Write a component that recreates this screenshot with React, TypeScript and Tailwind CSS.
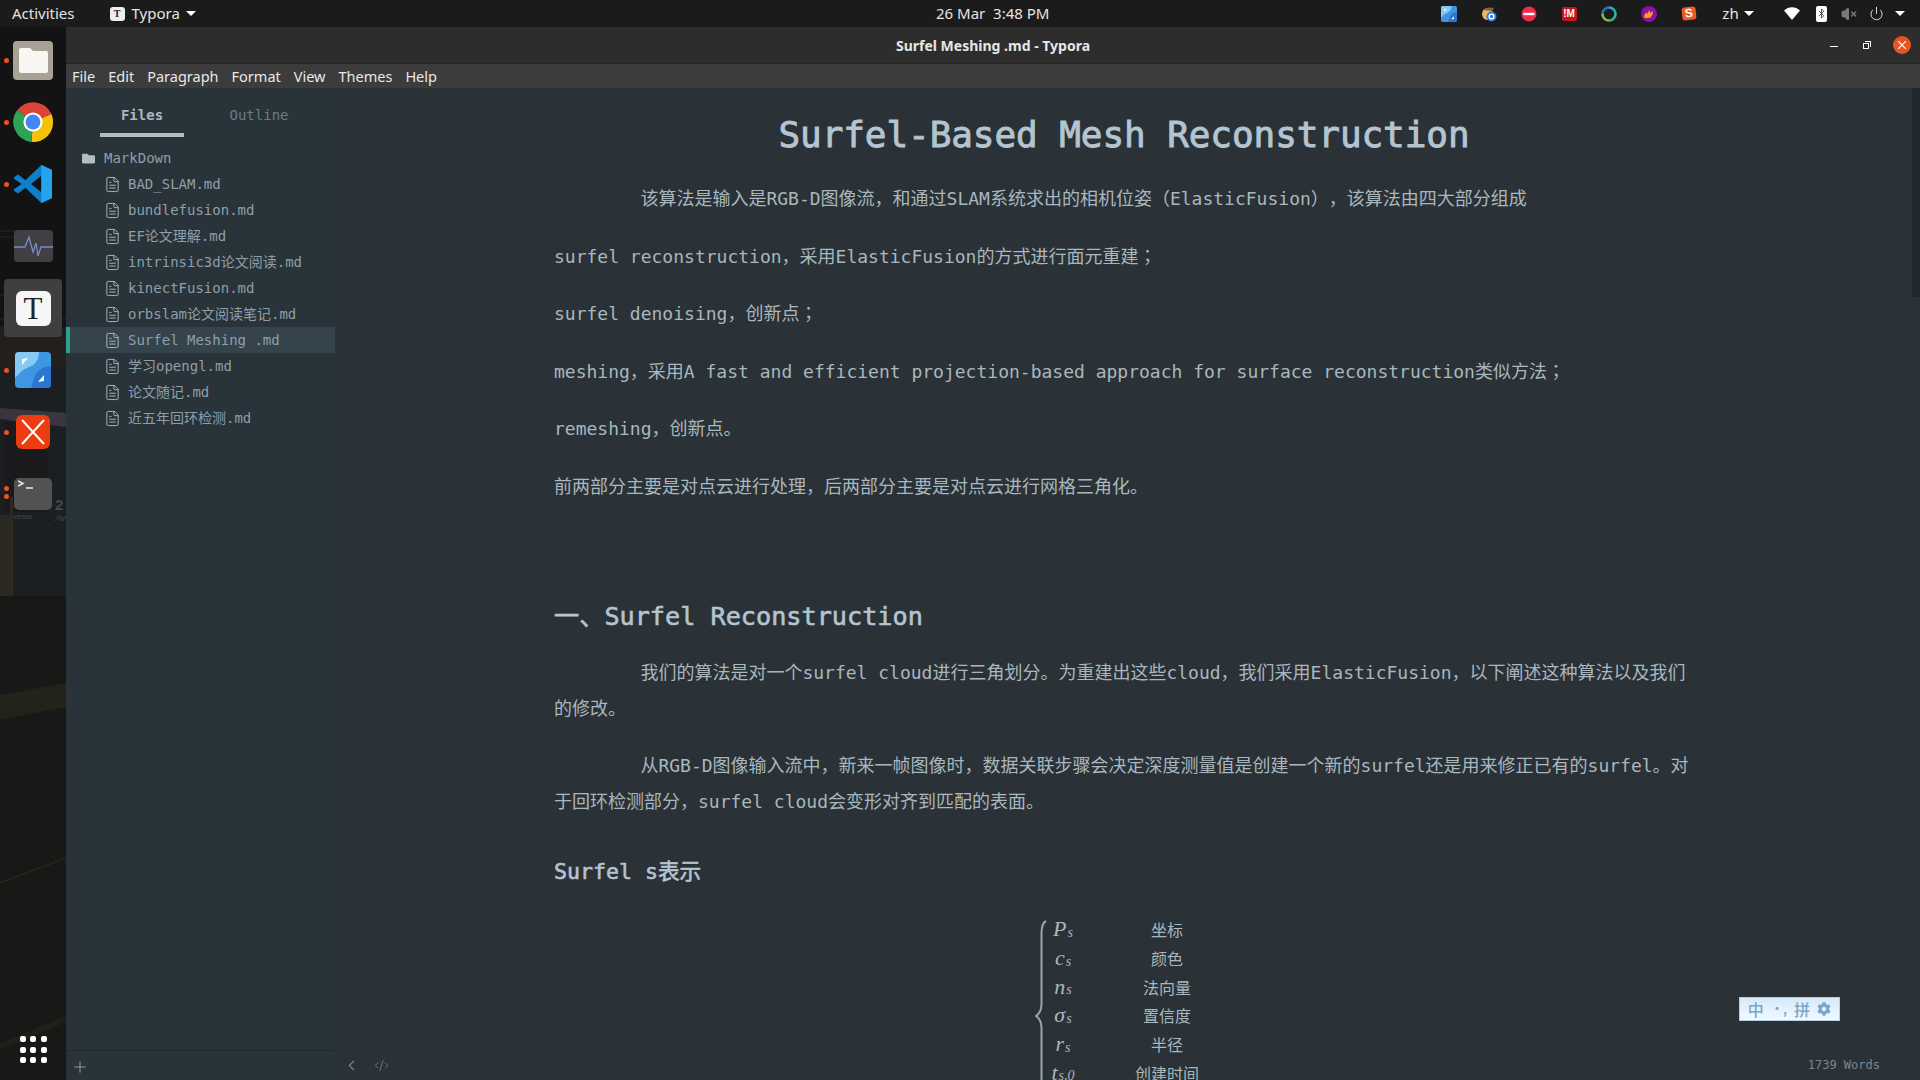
import React from "react";
import { Bluetooth, ChevronLeft, CodeXml, FileText, Plus, Power, VolumeX } from "lucide-react";
import { FaCog, FaFolder } from "react-icons/fa";

const files = [
  "BAD_SLAM.md",
  "bundlefusion.md",
  "EF论文理解.md",
  "intrinsic3d论文阅读.md",
  "kinectFusion.md",
  "orbslam论文阅读笔记.md",
  "Surfel Meshing .md",
  "学习opengl.md",
  "论文随记.md",
  "近五年回环检测.md",
];

const menus = ["File", "Edit", "Paragraph", "Format", "View", "Themes", "Help"];

const mathRows: [string, string, string][] = [
  ["P", "s", "坐标"],
  ["c", "s", "颜色"],
  ["n", "s", "法向量"],
  ["σ", "s", "置信度"],
  ["r", "s", "半径"],
  ["t", "s,0", "创建时间"],
];

function Caret() {
  return <span className="inline-block w-0 h-0 border-x-[5px] border-x-transparent border-t-[5px] border-t-white" />;
}

// the semicolon sits centred in the reference, as in the TC font
function Semi() {
  return <span className="leading-[0] font-['Noto_Sans_CJK_TC',sans-serif]">；</span>;
}

function BlueAppIcon({ size }: { size: number }) {
  return (
    <svg width={size} height={size} viewBox="0 0 36 36">
      <rect width="36" height="36" rx="4" fill="#3f97e4" />
      <path d="M0 4a4 4 0 0 1 4-4h20c0 8-4 13-10 15S4 22 0 26z" fill="#86caf3" />
      <path d="M36 14c-8 0-15 5-17 12-1 4-2 7-3 10h16a4 4 0 0 0 4-4z" fill="#2b76d2" />
      <path d="M7 7l6-1-6 7z" fill="#fff" />
      <path d="M29 29l-6 1 6-7z" fill="#fff" />
    </svg>
  );
}

function Tray() {
  return (
    <div className="flex items-center ml-auto h-full pr-[6px]">
      <div className="w-10 flex justify-center">
        <BlueAppIcon size={16} />
      </div>
      <div className="w-10 flex justify-center">
        <svg width="16" height="16" viewBox="0 0 16 16">
          <ellipse cx="6.5" cy="8" rx="5.5" ry="6" fill="#e8b46c" />
          <path d="M2 4c2-3 8-3 11-2l-2 3z" fill="#8a6236" />
          <circle cx="10.5" cy="10.5" r="5" fill="#2a7de1" />
          <circle cx="10.5" cy="10.5" r="2.4" fill="none" stroke="#fff" strokeWidth="1.4" />
        </svg>
      </div>
      <div className="w-10 flex justify-center">
        <svg width="16" height="16" viewBox="0 0 16 16">
          <circle cx="8" cy="8" r="7.5" fill="#ee2c4b" />
          <rect x="2.5" y="6.8" width="11" height="2.4" fill="#fff" />
        </svg>
      </div>
      <div className="w-10 flex justify-center">
        <span className="w-[15px] h-[14px] rounded-[2px] bg-[#c4161c] text-white text-[10px] leading-[14px] font-bold text-center font-['Liberation_Sans',sans-serif]">!M</span>
      </div>
      <div className="w-10 flex justify-center">
        <svg width="16" height="16" viewBox="0 0 16 16" fill="none" strokeWidth="2.6">
          <path d="M8 1.5a6.5 6.5 0 0 1 6.5 6.5" stroke="#2fa8c8" />
          <path d="M14.5 8A6.5 6.5 0 0 1 8 14.5" stroke="#3bb58f" />
          <path d="M8 14.5A6.5 6.5 0 0 1 1.5 8" stroke="#7ac143" />
          <path d="M1.5 8A6.5 6.5 0 0 1 8 1.5" stroke="#2b6fb5" />
        </svg>
      </div>
      <div className="w-10 flex justify-center">
        <svg width="16" height="16" viewBox="0 0 16 16">
          <circle cx="8" cy="8" r="8" fill="#8e0fa3" />
          <path d="M3 11c0-3 2-3 2-5 1 1 1 2 1 2 1-1 2-3 2-4 1 1 1 2 1 3 1-1 2-1 3-2 0 3-1 4-2 6-1 1-6 2-7 0z" fill="#f8a21b" />
        </svg>
      </div>
      <div className="w-10 flex justify-center">
        <span className="w-[14px] h-[13px] rounded-[3px] -rotate-6 bg-[#ee5a24] text-white text-[12px] leading-[13px] font-bold text-center font-['Liberation_Sans',sans-serif]">S</span>
      </div>
      <div className="w-[58px] flex items-center justify-center gap-[5px] text-[15px] text-[#e6e6e6]">
        zh <Caret />
      </div>
      <div className="w-[30px] ml-[10px] flex justify-center">
        <svg width="16" height="13" viewBox="0 0 16 13">
          <path d="M0 3.5C4.5-1 11.5-1 16 3.5L8 13z" fill="#fff" />
        </svg>
      </div>
      <div className="w-[28px] flex justify-center">
        <span className="w-[11px] h-4 rounded-[2px] bg-white flex items-center justify-center">
          <Bluetooth size={13} color="#222" strokeWidth={1.6} />
        </span>
      </div>
      <div className="w-[28px] flex justify-center">
        <VolumeX size={16} color="#7b7b7b" fill="#7b7b7b" />
      </div>
      <div className="w-[27px] flex justify-center">
        <Power size={15} color="#e6e6e6" strokeWidth={1.5} />
      </div>
      <div className="w-[24px] pr-1 flex justify-center">
        <Caret />
      </div>
    </div>
  );
}

function TopBar() {
  return (
    <div className="h-[27px] shrink-0 bg-[#1b1b1b] relative flex items-center text-[15px] text-[#e4e4e4] font-['Noto_Sans',sans-serif]">
      <span className="ml-3">Activities</span>
      <span className="ml-[35px] w-[15px] h-[14px] rounded-[3px] bg-[#eee] text-[#222] text-[10px] leading-[14px] text-center font-bold font-['Liberation_Serif',serif]">T</span>
      <span className="ml-[7px]">Typora</span>
      <span className="ml-[6px] flex">
        <Caret />
      </span>
      <span className="absolute left-[936px] text-[15px] whitespace-pre">26 Mar  3:48 PM</span>
      <Tray />
    </div>
  );
}

function Slot({ dots = 1, children }: { dots?: number; children: React.ReactNode }) {
  return (
    <div className="h-[62px] relative flex items-center justify-center">
      {dots === 1 && <span className="absolute left-[4px] top-[28.5px] w-[5px] h-[5px] rounded-full bg-[#e95420]" />}
      {dots === 2 && (
        <>
          <span className="absolute left-[4px] top-[23px] w-[5px] h-[5px] rounded-full bg-[#e95420]" />
          <span className="absolute left-[4px] top-[31px] w-[5px] h-[5px] rounded-full bg-[#e95420]" />
        </>
      )}
      {children}
    </div>
  );
}

function Dock() {
  return (
    <div className="w-[66px] shrink-0 relative overflow-hidden bg-[#131313] flex flex-col pt-[2px]">
      {/* wallpaper behind the dock */}
      <svg className="absolute inset-0" width="66" height="1053" viewBox="0 0 66 1053">
        <rect y="300" width="66" height="270" fill="#1b1f22" />
        <rect y="305" width="66" height="35" fill="#231f1c" />
        <path d="M0 381l66 5v14l-66-8z" fill="#3a3640" />
        <rect y="395" x="4" width="44" height="90" fill="#1a1a1c" />
        <rect y="488" width="10" height="82" fill="#2b2a22" />
        <rect y="470" x="10" width="3" height="100" fill="#2e2a22" />
        <rect y="569" width="66" height="484" fill="#181816" />
        <path d="M0 668L66 656V680L0 693z" fill="#23221b" />
        <path d="M0 856L66 831" stroke="#2c2c28" strokeWidth="1" />
        <path d="M0 1020l66-28" stroke="#1f1f1c" strokeWidth="6" />
        <path d="M0 204h30M0 210h16M0 268h50M0 292h66" stroke="#26261f" strokeWidth="1" />
        <text x="55" y="483" fontSize="15" fontWeight="bold" fill="#45474a" fontFamily="Liberation Sans, sans-serif">2</text>
        <text x="55" y="494" fontSize="9" fontStyle="italic" fill="#45474a" fontFamily="Liberation Sans, sans-serif">Av</text>
        <text x="13" y="492" fontSize="7" fill="#45474a" fontFamily="Liberation Sans, sans-serif">venue</text>
      </svg>

      <Slot>
        <div className="w-[40px] h-[39px] rounded-[4px] bg-[#a8a294] flex items-center justify-center">
          <svg width="29" height="25" viewBox="0 0 29 25">
            <path d="M2 0h9l3 3h13a2 2 0 0 1 2 2v18a2 2 0 0 1-2 2H2a2 2 0 0 1-2-2V2a2 2 0 0 1 2-2z" fill="#f7f6f3" />
          </svg>
        </div>
      </Slot>
      <Slot>
        <svg className="relative" width="40" height="40" viewBox="0 0 100 100">
          <path d="M50 50L11 20A50 50 0 0 1 96 30z" fill="#db4437" />
          <path d="M50 50L96 30A50 50 0 0 1 46 100z" fill="#f4c20d" />
          <path d="M50 50L46 100A50 50 0 0 1 11 20z" fill="#2fa354" />
          <circle cx="50" cy="50" r="24" fill="#fff" />
          <circle cx="50" cy="50" r="18.5" fill="#4285f4" />
        </svg>
      </Slot>
      <Slot>
        <svg className="relative" width="38" height="38" viewBox="0 0 100 100">
          <path fillRule="evenodd" d="M72 0L100 13V87L72 100L30 60L11 75L0 68V64L20 50L0 36V32L11 25L30 40zM72 28L45 50L72 72z" fill="#0f7fcb" />
          <path fillRule="evenodd" d="M72 0L100 13V87L72 100z" fill="#22a4ef" />
        </svg>
      </Slot>
      <Slot dots={0}>
        <div className="relative w-[39px] h-[32px] rounded-[4px] bg-[#403f44] flex items-center justify-center">
          <svg width="39" height="24" viewBox="0 0 39 24" fill="none" stroke="#7b8bc4" strokeWidth="1.3">
            <path d="M0 13h7l4 0 4-10 4 15 3-9 2 13 3-9h12" />
          </svg>
        </div>
      </Slot>
      <Slot>
        <div className="absolute left-[4px] top-[2px] w-[58px] h-[58px] rounded-[4px] bg-[#3f3f3f]" />
        <div className="relative w-[35px] h-[35px] rounded-[6px] bg-[#f6f6f6] text-[#222] text-[31px] leading-[35px] text-center font-['Liberation_Serif',serif]">T</div>
      </Slot>
      <Slot>
        <div className="relative flex">
          <BlueAppIcon size={36} />
        </div>
      </Slot>
      <Slot>
        <svg className="relative" width="34" height="34" viewBox="0 0 34 34">
          <rect width="34" height="34" rx="6" fill="#ec3d12" />
          <path d="M6 5l11 12L28 5M6 29l11-12 11 12" fill="none" stroke="#fff" strokeWidth="2" />
        </svg>
      </Slot>
      <Slot dots={2}>
        <div className="relative w-[38px] h-[32px] rounded-[5px] bg-[#525252] text-[#eee] pl-1 pt-[2px]">
          <svg width="16" height="10" viewBox="0 0 16 10" fill="none" stroke="#eee" strokeWidth="1.4">
            <path d="M0 1l5 2.5L0 6M8 8h7" />
          </svg>
        </div>
      </Slot>

      <div className="mt-auto mb-[17px] relative grid grid-cols-3 gap-[4.5px] self-center">
        {Array.from({ length: 9 }).map((_, i) => (
          <span key={i} className="w-[6px] h-[6px] rounded-[2px] bg-white" />
        ))}
      </div>
    </div>
  );
}

function Sidebar() {
  return (
    <aside className="w-[269px] shrink-0 bg-[#29333a] flex flex-col text-[14px] text-[#8f9fa8] [text-spacing-trim:space-all] font-['DejaVu_Sans_Mono','Noto_Sans_CJK_SC',monospace]">
      <div className="flex pl-[34px] gap-[33px] h-[49px] shrink-0">
        <div className="w-[84px] h-[49px] border-b-4 border-[#b0bec5] text-center font-bold text-[#a9b7be] pt-[17px] leading-[20px]">Files</div>
        <div className="w-[84px] text-center text-[#6b7a82] pt-[17px] leading-[20px]">Outline</div>
      </div>
      <div className="h-[26px] mt-[8px] flex items-center pl-4 gap-[9px]">
        <FaFolder size={13} color="#b0bec5" />
        <span>MarkDown</span>
      </div>
      {files.map((name) => {
        const active = name === "Surfel Meshing .md";
        return (
          <div
            key={name}
            className={
              active
                ? "h-[26px] flex items-center pl-[34px] gap-[7px] bg-[#35444c] border-l-4 border-[#2f9e8c] whitespace-pre"
                : "h-[26px] flex items-center pl-[38px] gap-[7px] whitespace-pre"
            }
          >
            <FileText size={17} color="#b0bec5" strokeWidth={1.3} />
            <span>{name}</span>
          </div>
        );
      })}
      <div className="mt-auto h-[30px] border-t border-[#23282c] flex items-center pl-[5px] pt-[3px]">
        <Plus size={18} color="#b0bec5" strokeWidth={1} />
      </div>
    </aside>
  );
}

function MathBlock() {
  return (
    <div className="flex justify-center mt-[27px] font-['Liberation_Serif',serif]">
      <svg className="shrink-0 mt-[5px]" width="12" height="192" viewBox="0 0 12 192" fill="none" stroke="#98a6ad" strokeWidth="2">
        <path d="M11 1C7 3 6.5 8 6.5 14V84C6.5 90 4 94 1 96C4 98 6.5 102 6.5 108V178" />
      </svg>
      <div className="w-[32px] shrink-0">
        {mathRows.map(([v, sub]) => (
          <div key={v} className="h-[28.7px] flex items-center justify-center text-[22px] leading-none italic whitespace-nowrap">
            {v}
            <sub className="text-[14px] ml-px">{sub}</sub>
          </div>
        ))}
      </div>
      <div className="w-[92px] ml-[42px] shrink-0 font-['Noto_Sans_CJK_SC',sans-serif]">
        {mathRows.map(([v, , label]) => (
          <div key={v} className="h-[28.7px] flex items-center justify-center text-[16px] leading-none whitespace-nowrap">
            {label}
          </div>
        ))}
      </div>
    </div>
  );
}

function Editor() {
  return (
    <main className="flex-1 relative overflow-hidden bg-[#2a3238] text-[18px] leading-[36px] text-[#a9b7be] [text-spacing-trim:space-all] font-['DejaVu_Sans_Mono','Noto_Sans_CJK_SC',monospace]">
      <div className="w-[1140px] ml-[219px] pt-[24px]">
        <h1 className="text-[36px] leading-[46px] text-[#b4c4d0] text-center tracking-[-0.08px] mb-[23px] [-webkit-text-stroke:0.9px_#b4c4d0]">Surfel-Based Mesh Reconstruction</h1>
        <p className="mb-[21.6px] indent-[86.4px]">该算法是输入是RGB-D图像流，和通过SLAM系统求出的相机位姿（ElasticFusion），该算法由四大部分组成</p>
        <p className="mb-[21.6px]">surfel reconstruction，采用ElasticFusion的方式进行面元重建<Semi /></p>
        <p className="mb-[21.6px]">surfel denoising，创新点<Semi /></p>
        <p className="mb-[21.6px]">meshing，采用A fast and efficient projection-based approach for surface reconstruction类似方法<Semi /></p>
        <p className="mb-[21.6px]">remeshing，创新点。</p>
        <p>前两部分主要是对点云进行处理，后两部分主要是对点云进行网格三角化。</p>
        <h2 className="mt-[94px] mb-[20px] text-[25.2px] leading-[36px] text-[#b4c4d0] [-webkit-text-stroke:0.6px_#b4c4d0]">一、Surfel Reconstruction</h2>
        <p className="mb-[21px] indent-[86.4px]">我们的算法是对一个surfel cloud进行三角划分。为重建出这些cloud，我们采用ElasticFusion，以下阐述这种算法以及我们的修改。</p>
        <p className="indent-[86.4px]">从RGB-D图像输入流中，新来一帧图像时，数据关联步骤会决定深度测量值是创建一个新的surfel还是用来修正已有的surfel。对于回环检测部分，surfel cloud会变形对齐到匹配的表面。</p>
        <h3 className="mt-[36px] text-[21.6px] leading-[32px] text-[#b4c4d0] [-webkit-text-stroke:0.6px_#b4c4d0]">Surfel s表示</h3>
        <MathBlock />
      </div>

      {/* scrollbar thumb */}
      <div className="absolute right-0 top-0 w-2 h-[209px] bg-[#202a2e]" />

      {/* status bar */}
      <div className="absolute left-[8px] bottom-[6px] flex items-center gap-[14px] text-[#7b868b]">
        <ChevronLeft size={17} strokeWidth={1.5} />
        <CodeXml size={15} strokeWidth={1.3} />
      </div>
      <span className="absolute right-[40px] bottom-[6px] text-[12px] leading-[18px] text-[#7b868b]">1739 Words</span>

      {/* input method toolbar */}
      <div className="absolute left-[1404px] top-[909px] w-[101px] h-[24px] flex items-center justify-around px-[4px] border border-[#aed0e8] bg-gradient-to-b from-[#d6eafa] to-[#f2f9ff] text-[16px] leading-none font-medium text-[#7ba6c8] font-['Noto_Sans_CJK_SC',sans-serif]">
        <span>中</span>
        <span className="text-[12px] font-bold">•,</span>
        <span>拼</span>
        <FaCog size={14} />
      </div>
    </main>
  );
}

export default function App() {
  return (
    <div className="w-[1920px] h-[1080px] overflow-hidden flex flex-col">
      <TopBar />
      <div className="flex-1 flex min-h-0">
        <Dock />
        <div className="flex-1 flex flex-col min-w-0">
          <div className="h-[37px] shrink-0 relative bg-[#2d2d2d] border-b border-[#252525] flex items-center justify-center text-[14px] font-bold text-[#e6e6e6] font-['Noto_Sans',sans-serif]">
            Surfel Meshing .md - Typora
            <span className="absolute left-[1764px] top-[19px] w-2 h-px bg-white" />
            <span className="absolute left-[1797px] top-[16px] w-[6px] h-[6px] border border-white" />
            <span className="absolute left-[1799px] top-[14px] w-[6px] h-[6px] border-t border-r border-white" />
            <span className="absolute left-[1827px] top-[9px] w-[18px] h-[18px] rounded-full bg-[#e95420] text-white flex items-center justify-center">
              <svg width="8" height="8" viewBox="0 0 8 8" stroke="#fff" strokeWidth="1.2">
                <path d="M0 0l8 8M8 0l-8 8" />
              </svg>
            </span>
          </div>
          <nav className="h-[24px] shrink-0 bg-[#3c3c3c] flex items-center pl-[6px] pt-px gap-[13px] text-[14.5px] text-[#e8e8e8] font-['Noto_Sans',sans-serif]">
            {menus.map((m) => (
              <span key={m}>{m}</span>
            ))}
          </nav>
          <div className="flex-1 flex min-h-0">
            <Sidebar />
            <Editor />
          </div>
        </div>
      </div>
    </div>
  );
}
